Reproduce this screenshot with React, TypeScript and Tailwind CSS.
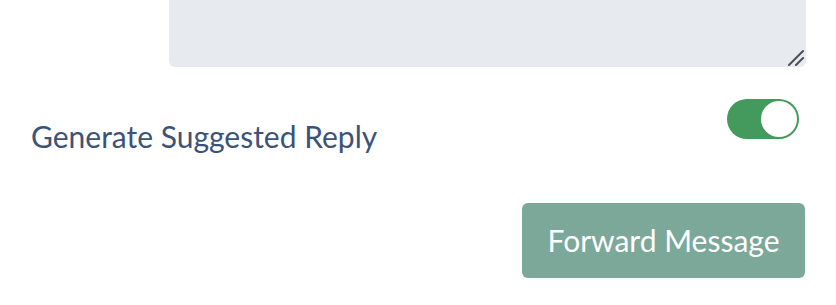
import { useState } from "react";

export default function App() {
  const [suggest, setSuggest] = useState(true);

  return (
    <div className="h-[305px] w-[836px] overflow-hidden bg-white font-['Lato','Open_Sans',sans-serif]">
      <div className="relative ml-[169px] mr-[30px]">
        <textarea
          className="block h-[67px] w-full resize-none rounded-b-md bg-[#e7eaee] outline-none"
          defaultValue=""
        />
        {/* resize grip */}
        <svg className="pointer-events-none absolute bottom-[1px] right-[1px]" width="18" height="18" viewBox="0 0 18 18">
          <path d="M2 17 L16 3" stroke="#4b4f56" strokeWidth="2" strokeLinecap="round" />
          <path d="M9 17 L16 10" stroke="#4b4f56" strokeWidth="2" strokeLinecap="round" />
        </svg>
      </div>

      <div className="ml-[31px] mr-[37px] mt-[32px] flex items-start justify-between">
        <span className="pt-[16px] text-[30px] leading-[42px] text-[#3c5379]">Generate Suggested Reply</span>
        <button
          type="button"
          onClick={() => setSuggest(!suggest)}
          className={`flex h-[40px] w-[72px] items-center rounded-full p-[2px] ${
            suggest ? "justify-end bg-[#449a5c]" : "justify-start bg-gray-300"
          }`}
        >
          <span className="block h-[36px] w-[36px] rounded-full bg-white" />
        </button>
      </div>

      <div className="mr-[31px] mt-[46px] flex justify-end">
        <button
          type="button"
          className="h-[75px] w-[283px] rounded-md bg-[#7ba899] text-[30px] text-white"
        >
          Forward Message
        </button>
      </div>
    </div>
  );
}
